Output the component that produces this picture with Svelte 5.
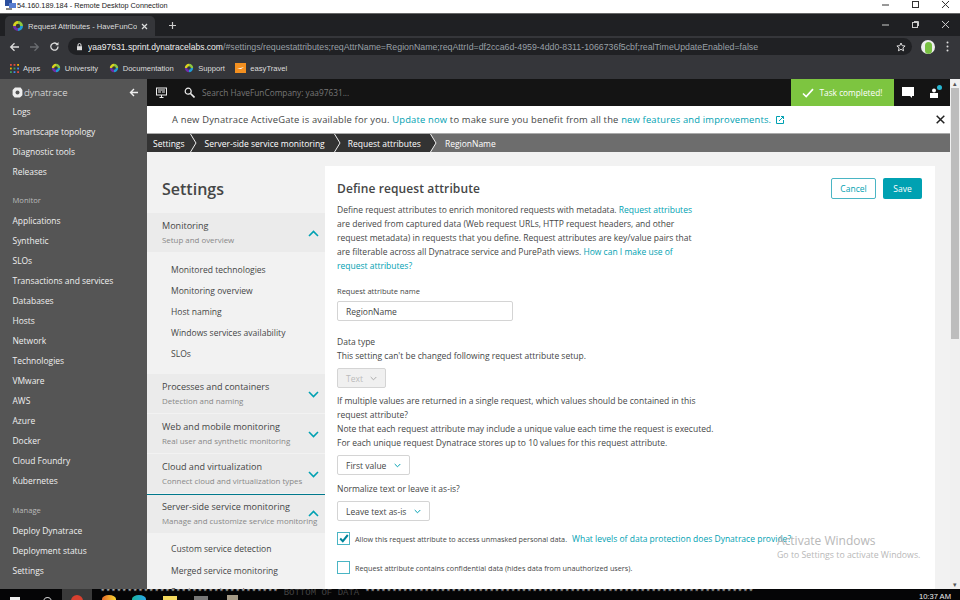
<script>
  const navTop = ["Logs", "Smartscape topology", "Diagnostic tools", "Releases"];
  const navMonitor = ["Applications", "Synthetic", "SLOs", "Transactions and services", "Databases", "Hosts", "Network", "Technologies", "VMware", "AWS", "Azure", "Docker", "Cloud Foundry", "Kubernetes"];
  const navManage = ["Deploy Dynatrace", "Deployment status", "Settings"];
  const monitoringLinks = ["Monitored technologies", "Monitoring overview", "Host naming", "Windows services availability", "SLOs"];
  const groups = [
    { title: "Processes and containers", sub: "Detection and naming" },
    { title: "Web and mobile monitoring", sub: "Real user and synthetic monitoring" },
    { title: "Cloud and virtualization", sub: "Connect cloud and virtualization types" }
  ];
  const serviceLinks = ["Custom service detection", "Merged service monitoring", "Service naming rules"];
  const crumbs = ["Settings", "Server-side service monitoring", "Request attributes"];
  const bookmarks = ["University", "Documentation", "Support"];
</script>

{#snippet ring(size)}
  <svg width={size} height={size} viewBox="0 0 12 12">
    <path d="M6 1 A5 5 0 0 1 11 6 L8.2 6 A2.2 2.2 0 0 0 6 3.8Z" fill="#8ec63f" />
    <path d="M11 6 A5 5 0 0 1 6 11 L6 8.2 A2.2 2.2 0 0 0 8.2 6Z" fill="#1f9bd7" />
    <path d="M6 11 A5 5 0 0 1 1 6 L3.8 6 A2.2 2.2 0 0 0 6 8.2Z" fill="#6f2da8" />
    <path d="M1 6 A5 5 0 0 1 6 1 L6 3.8 A2.2 2.2 0 0 0 3.8 6Z" fill="#d8d21f" />
  </svg>
{/snippet}

{#snippet chevron(up)}
  <svg class="chev" width="11" height="7" viewBox="0 0 11 7">
    <path d={up ? "M1 6 L5.5 1.5 L10 6" : "M1 1 L5.5 5.5 L10 1"} fill="none" stroke="#00a1b2" stroke-width="1.6" />
  </svg>
{/snippet}

{#snippet caret(color)}
  <svg width="7" height="5" viewBox="0 0 7 5">
    <path d="M.7 1 L3.5 3.8 L6.3 1" fill="none" stroke={color} stroke-width="1" />
  </svg>
{/snippet}

<div class="screen">
  <header class="rdp">
    <svg width="11" height="10" viewBox="0 0 11 10">
      <rect x="0" y="0" width="7" height="6" fill="#2b4f9e" />
      <rect x="4" y="3" width="7" height="5" fill="#5b7fcf" />
      <rect x="1" y="8" width="6" height="2" fill="#888" />
    </svg>
    <span class="rdp-title">54.160.189.184 - Remote Desktop Connection</span>
    <div class="win-buttons">
      <svg width="10" height="10" viewBox="0 0 10 10"><path d="M1 5h7" stroke="#333" /></svg>
      <svg width="10" height="10" viewBox="0 0 10 10"><rect x="1.5" y="1.5" width="6" height="6" fill="none" stroke="#333" /></svg>
      <svg width="10" height="10" viewBox="0 0 10 10"><path d="M1 1l7 7M8 1l-7 7" stroke="#333" /></svg>
    </div>
  </header>

  <div class="tabstrip">
    <div class="tab">
      {@render ring(12)}
      <span class="tab-title">Request Attributes - HaveFunCon</span>
      <svg width="7" height="7" viewBox="0 0 7 7"><path d="M1 1l5 5M6 1l-5 5" stroke="#ddd" stroke-width="1.2" /></svg>
    </div>
    <svg class="plus" width="9" height="9" viewBox="0 0 9 9"><path d="M4.5 1v7M1 4.5h7" stroke="#ccc" stroke-width="1.2" /></svg>
    <div class="win-buttons">
      <svg width="10" height="10" viewBox="0 0 10 10"><path d="M1 5h7" stroke="#ccc" /></svg>
      <svg width="10" height="10" viewBox="0 0 10 10"><rect x="1.5" y="2.5" width="5" height="5" fill="none" stroke="#ccc" /><path d="M3 1.5h4.5V6" fill="none" stroke="#ccc" /></svg>
      <svg width="10" height="10" viewBox="0 0 10 10"><path d="M1 1l7 7M8 1l-7 7" stroke="#ccc" /></svg>
    </div>
  </div>

  <div class="toolbar">
    <svg width="11" height="10" viewBox="0 0 11 10"><path d="M10 5H2M5.5 1.2 1.7 5l3.8 3.8" fill="none" stroke="#ddd" stroke-width="1.3" /></svg>
    <svg width="11" height="10" viewBox="0 0 11 10"><path d="M1 5h8M5.5 1.2 9.3 5 5.5 8.8" fill="none" stroke="#6a6c70" stroke-width="1.3" /></svg>
    <svg width="11" height="11" viewBox="0 0 11 11"><path d="M9 5.5A3.6 3.6 0 1 1 7.9 3" fill="none" stroke="#ddd" stroke-width="1.3" /><path d="M9.5 1v3.2H6.3z" fill="#ddd" /></svg>
    <div class="omnibox">
      <svg width="7" height="8" viewBox="0 0 7 8"><rect x="1" y="3.2" width="5" height="4" fill="#ddd" /><path d="M2 3.5V2a1.5 1.5 0 0 1 3 0v1.5" fill="none" stroke="#ddd" /></svg>
      <span class="url"><b>yaa97631.sprint.dynatracelabs.com</b>/#settings/requestattributes;reqAttrName=RegionName;reqAttrId=df2cca6d-4959-4dd0-8311-1066736f5cbf;realTimeUpdateEnabled=false</span>
      <svg class="star" width="10" height="10" viewBox="0 0 10 10"><path d="M5 1l1.2 2.7 2.9.3-2.2 1.9.7 2.9L5 7.3 2.4 8.8l.7-2.9L.9 4l2.9-.3z" fill="none" stroke="#ddd" /></svg>
    </div>
    <div class="avatar"><span></span></div>
    <svg class="dots" width="3" height="11" viewBox="0 0 3 11"><g fill="#ddd"><circle cx="1.5" cy="1.5" r="1" /><circle cx="1.5" cy="5.5" r="1" /><circle cx="1.5" cy="9.5" r="1" /></g></svg>
  </div>

  <div class="bookmarks">
    <span class="mark">
      <svg width="9" height="9" viewBox="0 0 10 10">
        <g fill="#e34b3c"><rect width="2" height="2" /><rect x="4" width="2" height="2" /></g>
        <rect x="8" width="2" height="2" fill="#f4b400" /><rect y="4" width="2" height="2" fill="#f4b400" />
        <rect x="4" y="4" width="2" height="2" fill="#3ca55c" /><rect x="8" y="4" width="2" height="2" fill="#4285f4" />
        <rect y="8" width="2" height="2" fill="#3ca55c" /><rect x="4" y="8" width="2" height="2" fill="#4285f4" /><rect x="8" y="8" width="2" height="2" fill="#e34b3c" />
      </svg>
      Apps
    </span>
    {#each bookmarks as name}
      <span class="mark">{@render ring(10)} {name}</span>
    {/each}
    <span class="mark">
      <svg width="11" height="10" viewBox="0 0 11 10"><rect width="11" height="10" fill="#f39020" /><path d="M2 6l7-2-3 2z" fill="#fff" /></svg>
      easyTravel
    </span>
  </div>

  <div class="app">
    <nav class="sidenav">
      <div class="brand">
        <svg width="11" height="11" viewBox="0 0 11 11"><path d="M3 .6h5.6L10.4 3v5.2L8 10.4H2.6L.6 8V3z" fill="#eee" /><circle cx="5.5" cy="5.5" r="2" fill="#555" /></svg>
        <span class="brand-name">dynatrace</span>
        <svg class="brand-back" width="10" height="9" viewBox="0 0 10 9"><path d="M9 4.5H2M5 1 1.5 4.5 5 8" fill="none" stroke="#eee" stroke-width="1.4" /></svg>
      </div>
      <ul class="nav-first">
        {#each navTop as item}<li>{item}</li>{/each}
      </ul>
      <p class="nav-head">Monitor</p>
      <ul>
        {#each navMonitor as item}<li>{item}</li>{/each}
      </ul>
      <p class="nav-head manage">Manage</p>
      <ul>
        {#each navManage as item}<li>{item}</li>{/each}
      </ul>
    </nav>

    <div class="main">
      <div class="main-col">
        <div class="topbar">
          <svg width="11" height="11" viewBox="0 0 11 11"><rect x=".5" y="1" width="10" height="7" fill="none" stroke="#eee" /><path d="M2 3h7M2 5h3M6 5h3" stroke="#eee" /><path d="M5.5 8v2M3.5 10.5h4" stroke="#eee" /></svg>
          <svg class="search-icon" width="11" height="11" viewBox="0 0 11 11"><circle cx="4.2" cy="4.2" r="3" fill="none" stroke="#eee" stroke-width="1.2" /><path d="M6.5 6.5l4 4" stroke="#eee" stroke-width="1.6" /></svg>
          <span class="search">Search HaveFunCompany: yaa97631...</span>
          <div class="task">
            <svg width="12" height="10" viewBox="0 0 12 10"><path d="M1 5.5l3.2 3L11 1.2" fill="none" stroke="#fff" stroke-width="1.7" /></svg>
            Task completed!
          </div>
          <svg class="top-chat" width="12" height="11" viewBox="0 0 12 11"><path d="M0 0h12v9h-2v2l-2-2H0z" fill="#fff" /></svg>
          <div class="top-user">
            <svg width="10" height="10" viewBox="0 0 10 10"><circle cx="4" cy="2.5" r="2" fill="#fff" /><rect y="5" width="8" height="5" fill="#fff" /></svg>
            <i></i>
          </div>
        </div>

        <div class="notice">
          <span>A new Dynatrace ActiveGate is available for you. <a>Update now</a> to make sure you benefit from all the <a>new features and improvements.</a></span>
          <svg width="8" height="8" viewBox="0 0 8 8"><path d="M4 .5H.5v7h7V4" fill="none" stroke="#00a1b2" /><path d="M3 5l4.5-4.5M5 .5h2.5V3" fill="none" stroke="#00a1b2" /></svg>
          <svg class="notice-close" width="9" height="9" viewBox="0 0 9 9"><path d="M.7.7l7.6 7.6M8.3.7.7 8.3" stroke="#222" stroke-width="1.5" /></svg>
        </div>

        <div class="crumbs">
          <div class="trail">
            {#each crumbs as crumb}
              <span class="crumb">{crumb}</span>
              <svg width="7" height="18" viewBox="0 0 7 18"><path d="M0 0 6 9 0 18z" fill="#333" /><path d="M.5 0 6 9 .5 18" fill="none" stroke="#eee" /></svg>
            {/each}
          </div>
          <span class="crumb-last">RegionName</span>
        </div>

        <div class="body">
          <div class="page">
            <aside class="settings">
              <h1>Settings</h1>
              <div class="group">
                <div><h3>Monitoring</h3><p>Setup and overview</p></div>
                {@render chevron(true)}
              </div>
              <ul class="links">
                {#each monitoringLinks as link}<li>{link}</li>{/each}
              </ul>
              {#each groups as group}
                <div class="group closed">
                  <div><h3>{group.title}</h3><p>{group.sub}</p></div>
                  {@render chevron(false)}
                </div>
              {/each}
              <div class="group current">
                <div><h3>Server-side service monitoring</h3><p>Manage and customize service monitoring</p></div>
                {@render chevron(true)}
              </div>
              <ul class="links service">
                {#each serviceLinks as link}<li>{link}</li>{/each}
              </ul>
            </aside>

            <section class="card">
              <div class="card-head">
                <h2>Define request attribute</h2>
                <button class="cancel">Cancel</button>
                <button class="save">Save</button>
              </div>
              <p class="intro">Define request attributes to enrich monitored requests with metadata. <a>Request attributes</a> are derived from captured data (Web request URLs, HTTP request headers, and other request metadata) in requests that you define. Request attributes are key/value pairs that are filterable across all Dynatrace service and PurePath views. <a>How can I make use of request attributes?</a></p>

              <label class="small" for="attr-name">Request attribute name</label>
              <input id="attr-name" value="RegionName" />

              <p class="copy datatype">Data type<br />This setting can't be changed following request attribute setup.</p>
              <div class="select disabled">Text {@render caret("#aaa")}</div>

              <p class="copy multi">If multiple values are returned in a single request, which values should be contained in this request attribute?<br />Note that each request attribute may include a unique value each time the request is executed.<br />For each unique request Dynatrace stores up to 10 values for this request attribute.</p>
              <div class="select">First value {@render caret("#00a1b2")}</div>

              <p class="copy normalize">Normalize text or leave it as-is?</p>
              <div class="select">Leave text as-is {@render caret("#00a1b2")}</div>

              <div class="check first-check">
                <span class="box">
                  <svg width="10" height="9" viewBox="0 0 10 9"><path d="M1.2 4.5l2.6 2.7L8.8 1" fill="none" stroke="#00849a" stroke-width="2" /></svg>
                </span>
                <span>Allow this request attribute to access unmasked personal data.</span>
                <a>What levels of data protection does Dynatrace provide?</a>
              </div>
              <div class="check">
                <span class="box"></span>
                <span>Request attribute contains confidential data (hides data from unauthorized users).</span>
              </div>
            </section>
          </div>

          <div class="activate">
            <strong>Activate Windows</strong>
            <span>Go to Settings to activate Windows.</span>
          </div>
        </div>
      </div>

      <div class="scrollbar">
        <span class="arrow">&#9652;</span>
        <div class="thumb"></div>
        <span class="arrow">&#9662;</span>
      </div>
    </div>
  </div>

  <footer class="taskbar">
    <span class="tb-icon start"></span>
    <span class="tb-icon search-ring"></span>
    <span class="tb-active"><i></i></span>
    <span class="tb-icon warm"></span>
    <span class="tb-icon blue"></span>
    <span class="tb-icon folder"></span>
    <span class="tb-icon term"></span>
    <span class="tb-icon misc"></span>
    <span class="bottom-text">********************************* <b>BOTTOM OF DATA</b> ************************************************************************</span>
    <span class="clock">10:37 AM</span>
  </footer>
</div>

<style>
  :global(body) {
    margin: 0;
    background: #fff;
  }
  .screen {
    width: 960px;
    height: 600px;
    overflow: hidden;
    display: flex;
    flex-direction: column;
    font-family: "Open Sans", "Liberation Sans", sans-serif;
    color: #454646;
  }
  p, h1, h2, h3, ul {
    margin: 0;
    padding: 0;
    font-weight: 400;
  }
  ul {
    list-style: none;
  }
  a {
    color: #00a1b2;
  }

  .rdp {
    height: 14px;
    flex: none;
    box-sizing: border-box;
    display: flex;
    align-items: center;
    gap: 1px;
    padding: 0 0 3px 5px;
    background: #fff;
    border-bottom: 1px solid #666;
    font: 7.3px "Liberation Sans", sans-serif;
    color: #222;
  }
  .win-buttons {
    margin-left: auto;
    display: flex;
    gap: 20px;
    padding-right: 9px;
  }
  .tabstrip {
    height: 22px;
    flex: none;
    display: flex;
    align-items: flex-end;
    background: #1f2023;
    padding-left: 5px;
  }
  .tabstrip .win-buttons {
    align-self: center;
  }
  .tab {
    width: 150px;
    height: 20px;
    box-sizing: border-box;
    display: flex;
    align-items: center;
    gap: 4px;
    padding: 0 7px;
    background: #35363a;
    border-radius: 5px 5px 0 0;
    font: 7.6px "Liberation Sans", sans-serif;
    color: #ddd;
  }
  .tab-title {
    flex: 1;
    overflow: hidden;
    white-space: nowrap;
  }
  .plus {
    align-self: center;
    margin-left: 13px;
  }
  .toolbar {
    height: 21px;
    flex: none;
    display: flex;
    align-items: center;
    gap: 9px;
    padding: 0 11px 0 9px;
    background: #35363a;
  }
  .omnibox {
    flex: 1;
    min-width: 0;
    height: 17px;
    margin-left: -1px;
    display: flex;
    align-items: center;
    gap: 5px;
    padding: 0 6px 0 8px;
    background: #202124;
    border-radius: 9px;
  }
  .url {
    flex: 1;
    overflow: hidden;
    white-space: nowrap;
    font: 8.8px "Liberation Sans", sans-serif;
    color: #9aa0a6;
  }
  .url b {
    font-weight: 400;
    font-size: 8.55px;
    color: #eee;
  }
  .avatar {
    width: 14px;
    height: 14px;
    border-radius: 50%;
    background: #eee;
    display: flex;
    justify-content: center;
    align-items: flex-end;
    overflow: hidden;
  }
  .avatar span {
    width: 7px;
    height: 12px;
    border-radius: 4px;
    background: #79c142;
  }
  .dots {
    margin-left: 2px;
  }
  .bookmarks {
    height: 22px;
    flex: none;
    display: flex;
    align-items: center;
    gap: 10.5px;
    padding-left: 10px;
    background: #35363a;
    font: 7.6px "Liberation Sans", sans-serif;
    color: #ddd;
  }
  .mark {
    display: flex;
    align-items: center;
    gap: 4px;
  }

  .app {
    flex: 1;
    min-height: 0;
    display: flex;
    background: #111;
  }
  .sidenav {
    width: 147px;
    flex: none;
    background: #555;
    color: #f0f0f0;
    font-size: 8.45px;
  }
  .brand {
    height: 27px;
    display: flex;
    align-items: center;
    padding-left: 12px;
  }
  .brand-name {
    margin-left: 1px;
    font-size: 9.8px;
    font-weight: 300;
  }
  .brand-back {
    margin-left: auto;
    margin-right: 8px;
  }
  .sidenav ul {
    padding-left: 12.5px;
  }
  .sidenav li {
    height: 20px;
    line-height: 20px;
    white-space: nowrap;
  }
  .nav-first {
    margin-top: -4px;
  }
  .nav-head {
    height: 21px;
    line-height: 20px;
    margin-top: 8px;
    padding-left: 12.5px;
    font-size: 7.6px;
    color: #bbb;
  }
  .nav-head.manage {
    margin-top: 9px;
  }

  .main {
    flex: 1;
    min-width: 0;
    display: flex;
  }
  .main-col {
    flex: 1;
    min-width: 0;
    display: flex;
    flex-direction: column;
  }
  .topbar {
    height: 27px;
    flex: none;
    display: flex;
    align-items: center;
    background: #141414;
    padding-left: 9px;
  }
  .search-icon {
    margin-left: 17px;
  }
  .search {
    margin-left: 7px;
    font-size: 8.3px;
    color: #777;
  }
  .task {
    margin-left: auto;
    width: 103px;
    height: 27px;
    box-sizing: border-box;
    display: flex;
    align-items: center;
    justify-content: center;
    gap: 5px;
    background: #7dc540;
    color: #fff;
    font-size: 8.3px;
  }
  .top-chat {
    margin-left: 8px;
  }
  .top-user {
    position: relative;
    margin: 2px 10px 0 16px;
    width: 10px;
    height: 11px;
  }
  .top-user svg {
    display: block;
  }
  .top-user i {
    position: absolute;
    top: -3px;
    right: -2px;
    width: 5px;
    height: 5px;
    border-radius: 50%;
    background: #27b6d1;
  }
  .notice {
    height: 28px;
    flex: none;
    box-sizing: border-box;
    display: flex;
    align-items: center;
    gap: 5px;
    padding: 0 5px 0 25px;
    background: #fff;
    border-bottom: 1px solid #aaa;
    font-size: 9.4px;
    letter-spacing: 0.18px;
  }
  .notice-close {
    margin-left: auto;
  }
  .crumbs {
    height: 18px;
    flex: none;
    display: flex;
    align-items: center;
    background: #6d6d6d;
    color: #fff;
    font-size: 8.5px;
    white-space: nowrap;
  }
  .trail {
    height: 18px;
    display: flex;
    align-items: center;
    padding-left: 6px;
    background: #333;
  }
  .trail svg {
    margin: 0 7px 0 9px;
    flex: none;
  }
  .trail svg:nth-child(2) {
    margin: 0 8px 0 5px;
  }
  .trail svg:last-child {
    margin-right: -7px;
  }
  .crumb-last {
    margin-left: 15px;
  }
  .body {
    flex: 1;
    min-height: 0;
    display: flex;
    position: relative;
  }
  .page {
    flex: 1;
    min-width: 0;
    overflow: hidden;
    display: flex;
    padding: 14px 15px 0 0;
    background: #f2f2f2;
  }

  .settings {
    width: 178px;
    flex: none;
    overflow: hidden;
  }
  .settings h1 {
    height: 47px;
    padding-left: 15px;
    font-size: 16px;
    line-height: 46px;
    font-weight: 600;
  }
  .group {
    height: 40px;
    box-sizing: border-box;
    display: flex;
    align-items: center;
    padding: 0 6px 0 15px;
    background: #ebebeb;
    border-bottom: 1px solid #f2f2f2;
    white-space: nowrap;
  }
  .group > div {
    flex: 1;
    min-width: 0;
  }
  .group h3 {
    font-size: 9.05px;
    line-height: 15px;
  }
  .group p {
    font-size: 7.9px;
    line-height: 14px;
    color: #888;
  }
  .group .chev {
    flex: none;
    margin-top: 2px;
  }
  .group.current {
    border-top: 1px solid #00788c;
    border-bottom: 0;
    height: 39px;
  }
  .group.current .chev {
    margin-top: 0;
  }
  .links {
    padding: 6.5px 0 8.5px 24px;
    font-size: 8.55px;
  }
  .links li {
    height: 21.2px;
    line-height: 21px;
    white-space: nowrap;
  }

  .card {
    flex: 1;
    min-width: 0;
    background: #fff;
    padding: 0 13px 0 12px;
    overflow: hidden;
    font-size: 8.5px;
  }
  .card-head {
    height: 21px;
    padding: 12px 0 4px;
    display: flex;
    align-items: center;
    gap: 7px;
  }
  .card-head h2 {
    flex: 1;
    font-size: 12px;
    font-weight: 600;
    letter-spacing: 0.1px;
  }
  button {
    height: 21px;
    box-sizing: border-box;
    border-radius: 2px;
    font: inherit;
    padding: 0;
  }
  .cancel {
    width: 45px;
    background: #fff;
    border: 1px solid #4ab5c4;
    color: #00a1b2;
  }
  .save {
    width: 39px;
    background: #00a1b2;
    border: 0;
    color: #fff;
  }
  .intro {
    width: 358px;
    line-height: 14px;
  }
  .small {
    display: block;
    margin-top: 12.5px;
    font-size: 7.5px;
    line-height: 11px;
  }
  input {
    display: block;
    box-sizing: border-box;
    width: 176px;
    height: 20px;
    margin-top: 4.5px;
    padding: 0 8px;
    border: 1px solid #d4d4d4;
    border-radius: 2px;
    font: inherit;
    color: #454646;
  }
  .copy {
    line-height: 14px;
  }
  .datatype {
    margin-top: 14px;
  }
  .multi {
    width: 380px;
    margin-top: 6px;
  }
  .normalize {
    margin-top: 7px;
  }
  .select {
    width: fit-content;
    height: 20px;
    box-sizing: border-box;
    display: flex;
    align-items: center;
    gap: 8px;
    margin-top: 5px;
    padding: 0 8px;
    border: 1px solid #d4d4d4;
    border-radius: 2px;
    background: #fff;
  }
  .select.disabled {
    gap: 7px;
    background: #f0f0f0;
    color: #bbb;
  }
  .check {
    display: flex;
    align-items: center;
    gap: 5px;
    margin-top: 16px;
    font-size: 7.25px;
    white-space: nowrap;
  }
  .check a {
    font-size: 8.53px;
  }
  .first-check {
    margin-top: 11px;
  }
  .box {
    width: 13px;
    height: 13px;
    flex: none;
    box-sizing: border-box;
    display: flex;
    align-items: center;
    justify-content: center;
    border: 1px solid #4ab5c4;
    background: #fff;
  }
  .scrollbar {
    width: 10px;
    flex: none;
    display: flex;
    flex-direction: column;
    background: #f0f0f0;
    font-size: 7px;
    line-height: 9px;
    text-align: center;
    color: #555;
  }
  .thumb {
    height: 251px;
    margin: 0 1px auto;
    background: #bdbdbd;
  }
  .activate {
    position: absolute;
    left: 630px;
    top: 381px;
    display: flex;
    flex-direction: column;
    color: #b8b8b8;
    font-size: 8.75px;
    line-height: 15px;
    white-space: nowrap;
    pointer-events: none;
  }
  .activate strong {
    font-weight: 400;
    font-size: 12px;
  }

  .taskbar {
    height: 11px;
    flex: none;
    position: relative;
    display: flex;
    align-items: flex-start;
    background: #050506;
    overflow: hidden;
  }
  .tb-icon {
    position: absolute;
    top: 7px;
    height: 8px;
  }
  .start {
    left: 10px;
    width: 10px;
    top: 8px;
    background: #eee;
  }
  .search-ring {
    left: 43px;
    width: 7px;
    top: 8px;
    border: 1px solid #ccc;
    border-radius: 50%;
  }
  .tb-active {
    position: absolute;
    left: 62px;
    width: 30px;
    height: 11px;
    background: #3a3a3a;
  }
  .tb-active i {
    position: absolute;
    left: 9px;
    top: 6px;
    width: 12px;
    height: 12px;
    border-radius: 50%;
    background: #d9402f;
  }
  .warm {
    left: 102px;
    width: 14px;
    top: 6px;
    background: linear-gradient(90deg, #e7692a, #f6d62f);
    border-radius: 50% 50% 0 0;
  }
  .blue {
    left: 132px;
    width: 14px;
    top: 6px;
    border-radius: 50% 50% 0 0;
    background: linear-gradient(90deg, #19b39c, #2aa5e8);
  }
  .folder {
    left: 163px;
    width: 14px;
    background: #f4d95d;
  }
  .term {
    left: 194px;
    width: 14px;
    background: #777;
  }
  .misc {
    left: 227px;
    width: 11px;
    top: 6px;
    background: #a59a86;
  }
  .bottom-text {
    position: absolute;
    left: 100px;
    top: 0;
    white-space: nowrap;
    font: 9px/9px "Liberation Mono", monospace;
    color: #bbb;
  }
  .bottom-text b {
    font-weight: 400;
    color: #444;
  }
  .clock {
    margin-left: auto;
    padding: 3px 9px 0 0;
    color: #eee;
    font: 7.6px "Liberation Sans", sans-serif;
    position: relative;
    background: #050506;
  }
</style>
